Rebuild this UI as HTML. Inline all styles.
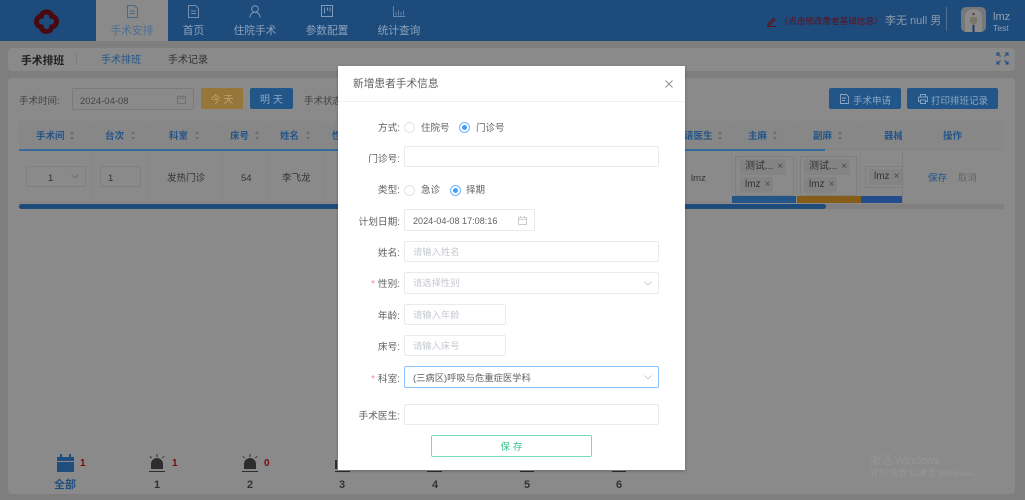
<!DOCTYPE html>
<html><head><meta charset="utf-8">
<style>
*{box-sizing:border-box;margin:0;padding:0}
html,body{width:1025px;height:500px;overflow:hidden;background:#7e7e7e}
body{position:relative;font-family:"Liberation Sans","Noto Sans CJK SC",sans-serif;font-size:9.500px;color:#3a3a3a}
#w{position:absolute;left:0;top:0;width:1025px;height:500px;overflow:hidden;filter:blur(.3px)}
.t,.b{position:absolute;white-space:nowrap}
.t{line-height:14px;margin-top:2px}
svg{position:absolute;overflow:visible}
.nav{color:#8ea3ba;font-size:10.700px;text-align:center}
.th{color:#245589;font-weight:bold;font-size:9.500px}
.sort{position:absolute;width:5px;height:9px}
.sort:before{content:"";position:absolute;left:0;top:0;border:2.5px solid transparent;border-top:0;border-bottom:3.5px solid #6c6c6c}
.sort:after{content:"";position:absolute;left:0;bottom:0;border:2.5px solid transparent;border-bottom:0;border-top:3.5px solid #6c6c6c}
.box{position:absolute;border:1px solid #7f7f7f;border-radius:2px}
.tag{position:absolute;background:#838383;border-radius:2px;height:16px;line-height:16px;padding-left:5px;font-size:10px;color:#333}
.tag i{font-style:normal;color:#4a4a4a;margin-left:4px}
.i{position:absolute;background:#fff;border:1px solid #e8eaee;border-radius:2px;height:21px;line-height:21px;padding-left:8px;font-size:9.300px;color:#c4c8cf}
.l{position:absolute;width:62px;text-align:right;left:338px;font-size:9.700px;line-height:14px;color:#606060;margin-top:2px}
.l b{color:#f78a8a;font-weight:normal;margin-right:3px}
.r{position:absolute;width:11px;height:11px;border-radius:50%;border:1px solid #e2e4ea;background:#fff}
.r.on{border-color:#6db4ff}
.r.on:after{content:"";position:absolute;left:2px;top:2px;width:5px;height:5px;border-radius:50%;background:#409eff}
.rt{position:absolute;font-size:9.500px;line-height:14px;color:#606060;margin-top:2px}
.num{position:absolute;color:#7a0a0a;font-size:10px;font-weight:bold;line-height:12px;margin-top:1px}
.tab{position:absolute;font-size:11px;font-weight:bold;line-height:14px;color:#333;text-align:center;width:30px;margin-top:1px}
</style></head>
<body><div id="w">
<!-- Header -->
<div class="b" style="left:0;top:0;width:1025px;height:41px;background:#1d4b7c"></div>
<div class="b" style="left:96px;top:0;width:72px;height:41px;background:#8a8a8a"></div>
<svg style="left:33px;top:9px" width="27" height="26" viewBox="0 0 27 26">
<path fill="none" stroke="#480a10" stroke-width="5" d="M13.500 3c3.500 0 5 2 5.200 4.200 2.300.2 4.800 2 4.800 5.300s-2.400 5.100-4.800 5.400c-.3 2.300-1.800 4.600-5.200 4.600s-5-2.300-5.200-4.600C5.900 17.600 3.500 15.800 3.500 12.500s2.400-5.100 4.800-5.300C8.500 5 10 3 13.500 3z"/>
</svg>
<!-- nav icons -->
<svg style="left:127px;top:5px" width="11" height="13" fill="none" stroke="#466889" stroke-width="1"><path d="M.5.5h7l3 3v9H.5zM3 6h5M3 8.500h5"/></svg>
<svg style="left:188px;top:5px" width="11" height="13" fill="none" stroke="#7890ad" stroke-width="1"><path d="M.5.5h7l3 3v9H.5zM3 6h5M3 8.500h5"/></svg>
<svg style="left:249px;top:5px" width="12" height="13" fill="none" stroke="#829ab5" stroke-width="1"><circle cx="6" cy="4" r="3.300"/><path d="M.7 12.500c.5-3.300 2.500-5.200 5.300-5.200s4.800 1.900 5.300 5.200"/></svg>
<svg style="left:321px;top:5px" width="12" height="12" fill="none" stroke="#829ab5" stroke-width="1"><path d="M.5.5h11v11H.5zM3.500 2.500v6M6.500 2.500v3M9 2.500v4"/></svg>
<svg style="left:393px;top:6px" width="12" height="11" fill="none" stroke="#6a87a8" stroke-width=".9"><path d="M.5 0v10.500H12M3 9.500V6M5.500 9.500V4M8 9.500V6M10.500 9.500V4.500"/></svg>
<div class="t nav" style="left:96px;top:22px;width:72px;color:#4f6d90">手术安排</div>
<div class="t nav" style="left:165px;top:22px;width:57px">首页</div>
<div class="t nav" style="left:225px;top:22px;width:60px">住院手术</div>
<div class="t nav" style="left:297px;top:22px;width:60px">参数配置</div>
<div class="t nav" style="left:369px;top:22px;width:60px">统计查询</div>
<svg style="left:767px;top:17px" width="10" height="10" fill="none" stroke="#5f0f18" stroke-width="1"><path d="M1 7 6.500 1.200l1.500 1.500L2.500 8 .8 8.300zM0 9.500h9"/></svg>
<div class="t" style="left:779.500px;top:12px;font-size:8.600px;color:#5f0f18">（点击修改患者基础信息）</div>
<div class="t" style="left:885px;top:12px;font-size:11px;color:#8c9bac">李无 null 男</div>
<div class="b" style="left:946px;top:7px;width:1px;height:24px;background:#4e7096"></div>
<div class="b" style="left:961px;top:7px;width:25px;height:25px;border-radius:5px;background:#787878;overflow:hidden">
<svg style="left:0;top:0" width="25" height="25"><path fill="#8a8a8a" d="M4 25V10c0-5 4-8 8.500-8s8.500 3 8.500 8v15z"/><path fill="#7a766a" d="M9 10h7v5l-3.500 4L9 15z"/><rect x="11.500" y="18" width="2" height="7" fill="#1f3c6c"/><circle cx="12.500" cy="7" r="1" fill="#5f0f18"/></svg>
</div>
<div class="t" style="left:993px;top:8px;font-size:11px;color:#95a3b2">lmz</div>
<div class="t" style="left:993px;top:19px;font-size:8.500px;color:#95a3b2">Test</div>

<!-- Tabs card -->
<div class="b" style="left:8px;top:48px;width:1007px;height:23px;background:#8a8a8a;border-radius:4px"></div>
<div class="t" style="left:21px;top:52px;font-size:10.800px;font-weight:bold;color:#1e1e1e">手术排班</div>
<div class="b" style="left:76px;top:54px;width:1px;height:11px;background:#7c7c7c"></div>
<div class="t" style="left:101px;top:52px;font-size:10px;color:#245589">手术排班</div>
<div class="t" style="left:168px;top:52px;font-size:10px;color:#333">手术记录</div>
<svg style="left:997px;top:53px" width="11" height="11" fill="none" stroke="#1f4d7e" stroke-width="1.100"><path d="M0 0l3.500 3.500M0 3V0h3M11 0 7.500 3.500M8 0h3v3M0 11l3.500-3.500M0 8v3h3M11 11 7.500 7.500M8 11h3V8"/></svg>

<!-- Main card -->
<div class="b" style="left:8px;top:78px;width:1007px;height:416px;background:#8a8a8a;border-radius:4px"></div>
<div class="t" style="left:19px;top:93px;color:#444">手术时间:</div>
<div class="box" style="left:72px;top:88px;width:122px;height:22px;border-color:#7a7a7a"></div>
<div class="t" style="left:80px;top:93px;color:#444">2024-04-08</div>
<svg style="left:177px;top:95px" width="9" height="9" fill="none" stroke="#6c6c6c" stroke-width=".8"><path d="M.5 1.500h8v7h-8zM.5 3.500h8M2.500 0v2M6.500 0v2"/></svg>
<div class="b" style="left:201px;top:88px;width:42px;height:21px;background:#97763a;border-radius:2px;color:#bfa573;text-align:center;line-height:25px;letter-spacing:3px;padding-left:3px;font-size:10px">今天</div>
<div class="b" style="left:250px;top:88px;width:43px;height:21px;background:#235688;border-radius:2px;color:#8ea8c6;text-align:center;line-height:25px;letter-spacing:3px;padding-left:3px;font-size:10px">明天</div>
<div class="t" style="left:304px;top:93px;color:#444">手术状态</div>
<div class="b" style="left:829px;top:88px;width:72px;height:21px;background:#235688;border-radius:2px"></div>
<svg style="left:840px;top:94px" width="9" height="10" fill="none" stroke="#8ca6c4" stroke-width=".9"><path d="M.5.500h6l2 2v7h-8zM2 4h4M2 6.500h3"/></svg>
<div class="t" style="left:853px;top:93px;color:#8ca6c4;font-size:9.500px">手术申请</div>
<div class="b" style="left:907px;top:88px;width:91px;height:21px;background:#235688;border-radius:2px"></div>
<svg style="left:918px;top:94px" width="10" height="10" fill="none" stroke="#8ca6c4" stroke-width=".9"><path d="M2.500 3V.500h5V3M.5 3h9v4.500h-2M2.500 7.500h-2V3M2.500 6h5v3.500h-5z"/></svg>
<div class="t" style="left:931px;top:93px;color:#8ca6c4">打印排班记录</div>

<!-- Table -->
<div class="b" style="left:19px;top:121px;width:885px;height:28px;background:#878787"></div>
<div class="b" style="left:825px;top:149px;width:79px;height:1px;background:#828282"></div>
<div class="b" style="left:19px;top:150px;width:885px;height:53px;border-bottom:1px solid #828282"></div>
<div class="b" style="left:92px;top:121px;width:1px;height:82px;background:#858585"></div>
<div class="b" style="left:148px;top:121px;width:1px;height:82px;background:#858585"></div>
<div class="b" style="left:222px;top:121px;width:1px;height:82px;background:#858585"></div>
<div class="b" style="left:268px;top:121px;width:1px;height:82px;background:#858585"></div>
<div class="b" style="left:324px;top:121px;width:1px;height:82px;background:#858585"></div>
<div class="b" style="left:731px;top:121px;width:1px;height:82px;background:#858585"></div>
<div class="b" style="left:796px;top:121px;width:1px;height:82px;background:#858585"></div>
<div class="b" style="left:860px;top:121px;width:1px;height:82px;background:#858585"></div>
<div class="b" style="left:19px;top:148.500px;width:806px;height:2px;background:#366a9f"></div>

<div class="t th" style="left:36px;top:128px">手术间</div><div class="sort" style="left:70px;top:131px"></div>
<div class="t th" style="left:105px;top:128px">台次</div><div class="sort" style="left:131px;top:131px"></div>
<div class="t th" style="left:169px;top:128px">科室</div><div class="sort" style="left:195px;top:131px"></div>
<div class="t th" style="left:230px;top:128px">床号</div><div class="sort" style="left:255px;top:131px"></div>
<div class="t th" style="left:280px;top:128px">姓名</div><div class="sort" style="left:306px;top:131px"></div>
<div class="t th" style="left:332px;top:128px">性</div>
<div class="t th" style="left:684px;top:128px">请医生</div><div class="sort" style="left:718px;top:131px"></div>
<div class="t th" style="left:748px;top:128px">主麻</div><div class="sort" style="left:773px;top:131px"></div>
<div class="t th" style="left:813px;top:128px">副麻</div><div class="sort" style="left:838px;top:131px"></div>
<div class="t th" style="left:884px;top:128px">器械</div>

<div class="box" style="left:26px;top:166px;width:60px;height:21px"></div>
<div class="t" style="left:48px;top:170px;color:#333">1</div>
<svg style="left:71px;top:174px" width="8" height="5" fill="none" stroke="#6c6c6c" stroke-width=".8"><path d="M.5.500 4 4 7.500.500"/></svg>
<div class="box" style="left:100px;top:166px;width:41px;height:21px"></div>
<div class="t" style="left:108px;top:170px;color:#333">1</div>
<div class="t" style="left:167px;top:170px;color:#333">发热门诊</div>
<div class="t" style="left:241px;top:170px;color:#333">54</div>
<div class="t" style="left:282px;top:170px;color:#333">李飞龙</div>
<div class="t" style="left:691px;top:170px;color:#333">lmz</div>

<div class="box" style="left:735px;top:156px;width:59px;height:40px"></div>
<div class="tag" style="left:740px;top:159px;width:46px">测试...<i>×</i></div>
<div class="tag" style="left:740px;top:177px;width:33px">lmz<i>×</i></div>
<div class="box" style="left:800px;top:156px;width:57px;height:40px"></div>
<div class="tag" style="left:804px;top:159px;width:46px">测试...<i>×</i></div>
<div class="tag" style="left:804px;top:177px;width:33px">lmz<i>×</i></div>
<div class="box" style="left:865px;top:166px;width:40px;height:22px"></div>
<div class="tag" style="left:869px;top:169px;width:36px">lmz<i>×</i></div>

<div class="b" style="left:732px;top:196px;width:64px;height:7px;background:#235688"></div>
<div class="b" style="left:797px;top:196px;width:64px;height:7px;background:#855c18"></div>
<div class="b" style="left:861px;top:196px;width:41px;height:7px;background:#234c8e"></div>

<div class="b" style="left:902px;top:121px;width:102px;height:82px;background:#8a8a8a;border-left:1px solid #7f7f7f"></div>
<div class="b" style="left:902px;top:121px;width:102px;height:29px;background:#878787;border-bottom:1px solid #828282"></div>
<div class="t th" style="left:943px;top:128px">操作</div>
<div class="t" style="left:928px;top:170px;color:#245589">保存</div>
<div class="t" style="left:958px;top:170px;color:#666">取消</div>
<div class="b" style="left:19px;top:204px;width:985px;height:5px;background:#808080"></div>
<div class="b" style="left:19px;top:204px;width:807px;height:5px;background:#1d4b7c;border-radius:3px"></div>

<!-- bottom tabs -->
<svg style="left:57px;top:454px" width="17" height="18"><path fill="#1f4d7e" d="M0 3h17v4H0zM0 8h17v10H0zM3 0h2v3H3zM12 0h2v3h-2z"/></svg>
<div class="num" style="left:80px;top:457px">1</div>
<div class="tab" style="left:50px;top:477px;color:#1f4d7e">全部</div>
<svg style="left:149px;top:454px" width="16" height="18"><path fill="#2d2d2d" d="M2 15V10a6 6 0 0 1 12 0v5zM0 17h16v1H0zM7.500 0h1v3h-1zM1 2l2 1.500-.5.700-2-1.500zM15 2l-2 1.500.5.700 2-1.500z"/></svg>
<div class="num" style="left:172px;top:457px">1</div>
<div class="tab" style="left:142px;top:477px">1</div>
<svg style="left:242px;top:454px" width="16" height="18"><path fill="#2d2d2d" d="M2 15V10a6 6 0 0 1 12 0v5zM0 17h16v1H0zM7.500 0h1v3h-1zM1 2l2 1.500-.5.700-2-1.500zM15 2l-2 1.500.5.700 2-1.500z"/></svg>
<div class="num" style="left:264px;top:457px">0</div>
<div class="tab" style="left:235px;top:477px">2</div>
<div class="b" style="left:335px;top:460px;width:2px;height:9px;background:#2d2d2d"></div>
<div class="b" style="left:335px;top:471px;width:15px;height:1px;background:#2d2d2d"></div>
<div class="tab" style="left:327px;top:477px">3</div>
<div class="b" style="left:427px;top:471px;width:15px;height:1px;background:#2d2d2d"></div>
<div class="tab" style="left:420px;top:477px">4</div>
<div class="b" style="left:520px;top:471px;width:14px;height:1px;background:#2d2d2d"></div>
<div class="tab" style="left:512px;top:477px">5</div>
<div class="b" style="left:612px;top:471px;width:14px;height:1px;background:#2d2d2d"></div>
<div class="tab" style="left:604px;top:477px">6</div>

<div class="t" style="left:870px;top:452px;font-size:11px;color:#969696">激活 Windows</div>
<div class="t" style="left:870px;top:464px;font-size:8.500px;color:#969696">转到"设置"以激活 Windows。</div>

<!-- Modal -->
<div class="b" style="left:338px;top:66px;width:347px;height:404px;background:#fff;box-shadow:0 1px 3px rgba(0,0,0,.25)"></div>
<div class="b" style="left:338px;top:101px;width:347px;height:1px;background:#f0f1f3"></div>
<div class="t" style="left:353px;top:75px;font-size:10.700px;color:#606060">新增患者手术信息</div>
<svg style="left:665px;top:80px" width="8" height="8" fill="none" stroke="#8a8a8a" stroke-width=".9"><path d="M.5.500l7 7M7.500.500l-7 7"/></svg>

<div class="l" style="top:120px">方式:</div>
<div class="r" style="left:404px;top:122px"></div><div class="rt" style="left:421px;top:120px">住院号</div>
<div class="r on" style="left:459px;top:122px"></div><div class="rt" style="left:476px;top:120px">门诊号</div>

<div class="l" style="top:151px">门诊号:</div>
<div class="i" style="left:404px;top:146px;width:255px"></div>

<div class="l" style="top:182px">类型:</div>
<div class="r" style="left:404px;top:185px"></div><div class="rt" style="left:421px;top:182px">急诊</div>
<div class="r on" style="left:450px;top:185px"></div><div class="rt" style="left:466px;top:182px">择期</div>

<div class="l" style="top:214px">计划日期:</div>
<div class="i" style="left:404px;top:209px;width:131px;color:#606060;font-size:9.100px;height:22px;line-height:22px">2024-04-08 17:08:16</div>
<svg style="left:518px;top:216px" width="9" height="9" fill="none" stroke="#c0c0c0" stroke-width=".8"><path d="M.5 1.500h8v7h-8zM.5 3.500h8M2.500 0v2M6.500 0v2"/></svg>

<div class="l" style="top:245px">姓名:</div>
<div class="i" style="left:404px;top:241px;width:255px">请输入姓名</div>

<div class="l" style="top:276px"><b>*</b>性别:</div>
<div class="i" style="left:404px;top:272px;width:255px;height:22px">请选择性别</div>
<svg style="left:644px;top:281px" width="8" height="5" fill="none" stroke="#c4c4c4" stroke-width=".8"><path d="M.5.500 4 4 7.500.500"/></svg>

<div class="l" style="top:308px">年龄:</div>
<div class="i" style="left:404px;top:304px;width:102px">请输入年龄</div>

<div class="l" style="top:339px">床号:</div>
<div class="i" style="left:404px;top:335px;width:102px">请输入床号</div>

<div class="l" style="top:371px"><b>*</b>科室:</div>
<div class="i" style="left:404px;top:366px;width:255px;height:22px;line-height:22px;border-color:#8ac4ff;color:#606060">(三病区)呼吸与危重症医学科</div>
<svg style="left:644px;top:375px" width="8" height="5" fill="none" stroke="#c4c4c4" stroke-width=".8"><path d="M.5.500 4 4 7.500.500"/></svg>

<div class="l" style="top:408px">手术医生:</div>
<div class="i" style="left:404px;top:404px;width:255px"></div>

<div class="b" style="left:431px;top:435px;width:161px;height:22px;border:1px solid #78dcb3;border-radius:2px;text-align:center;line-height:23px;color:#36c48a;letter-spacing:3px;padding-left:3px;font-size:9.500px">保存</div>
</div></body></html>
